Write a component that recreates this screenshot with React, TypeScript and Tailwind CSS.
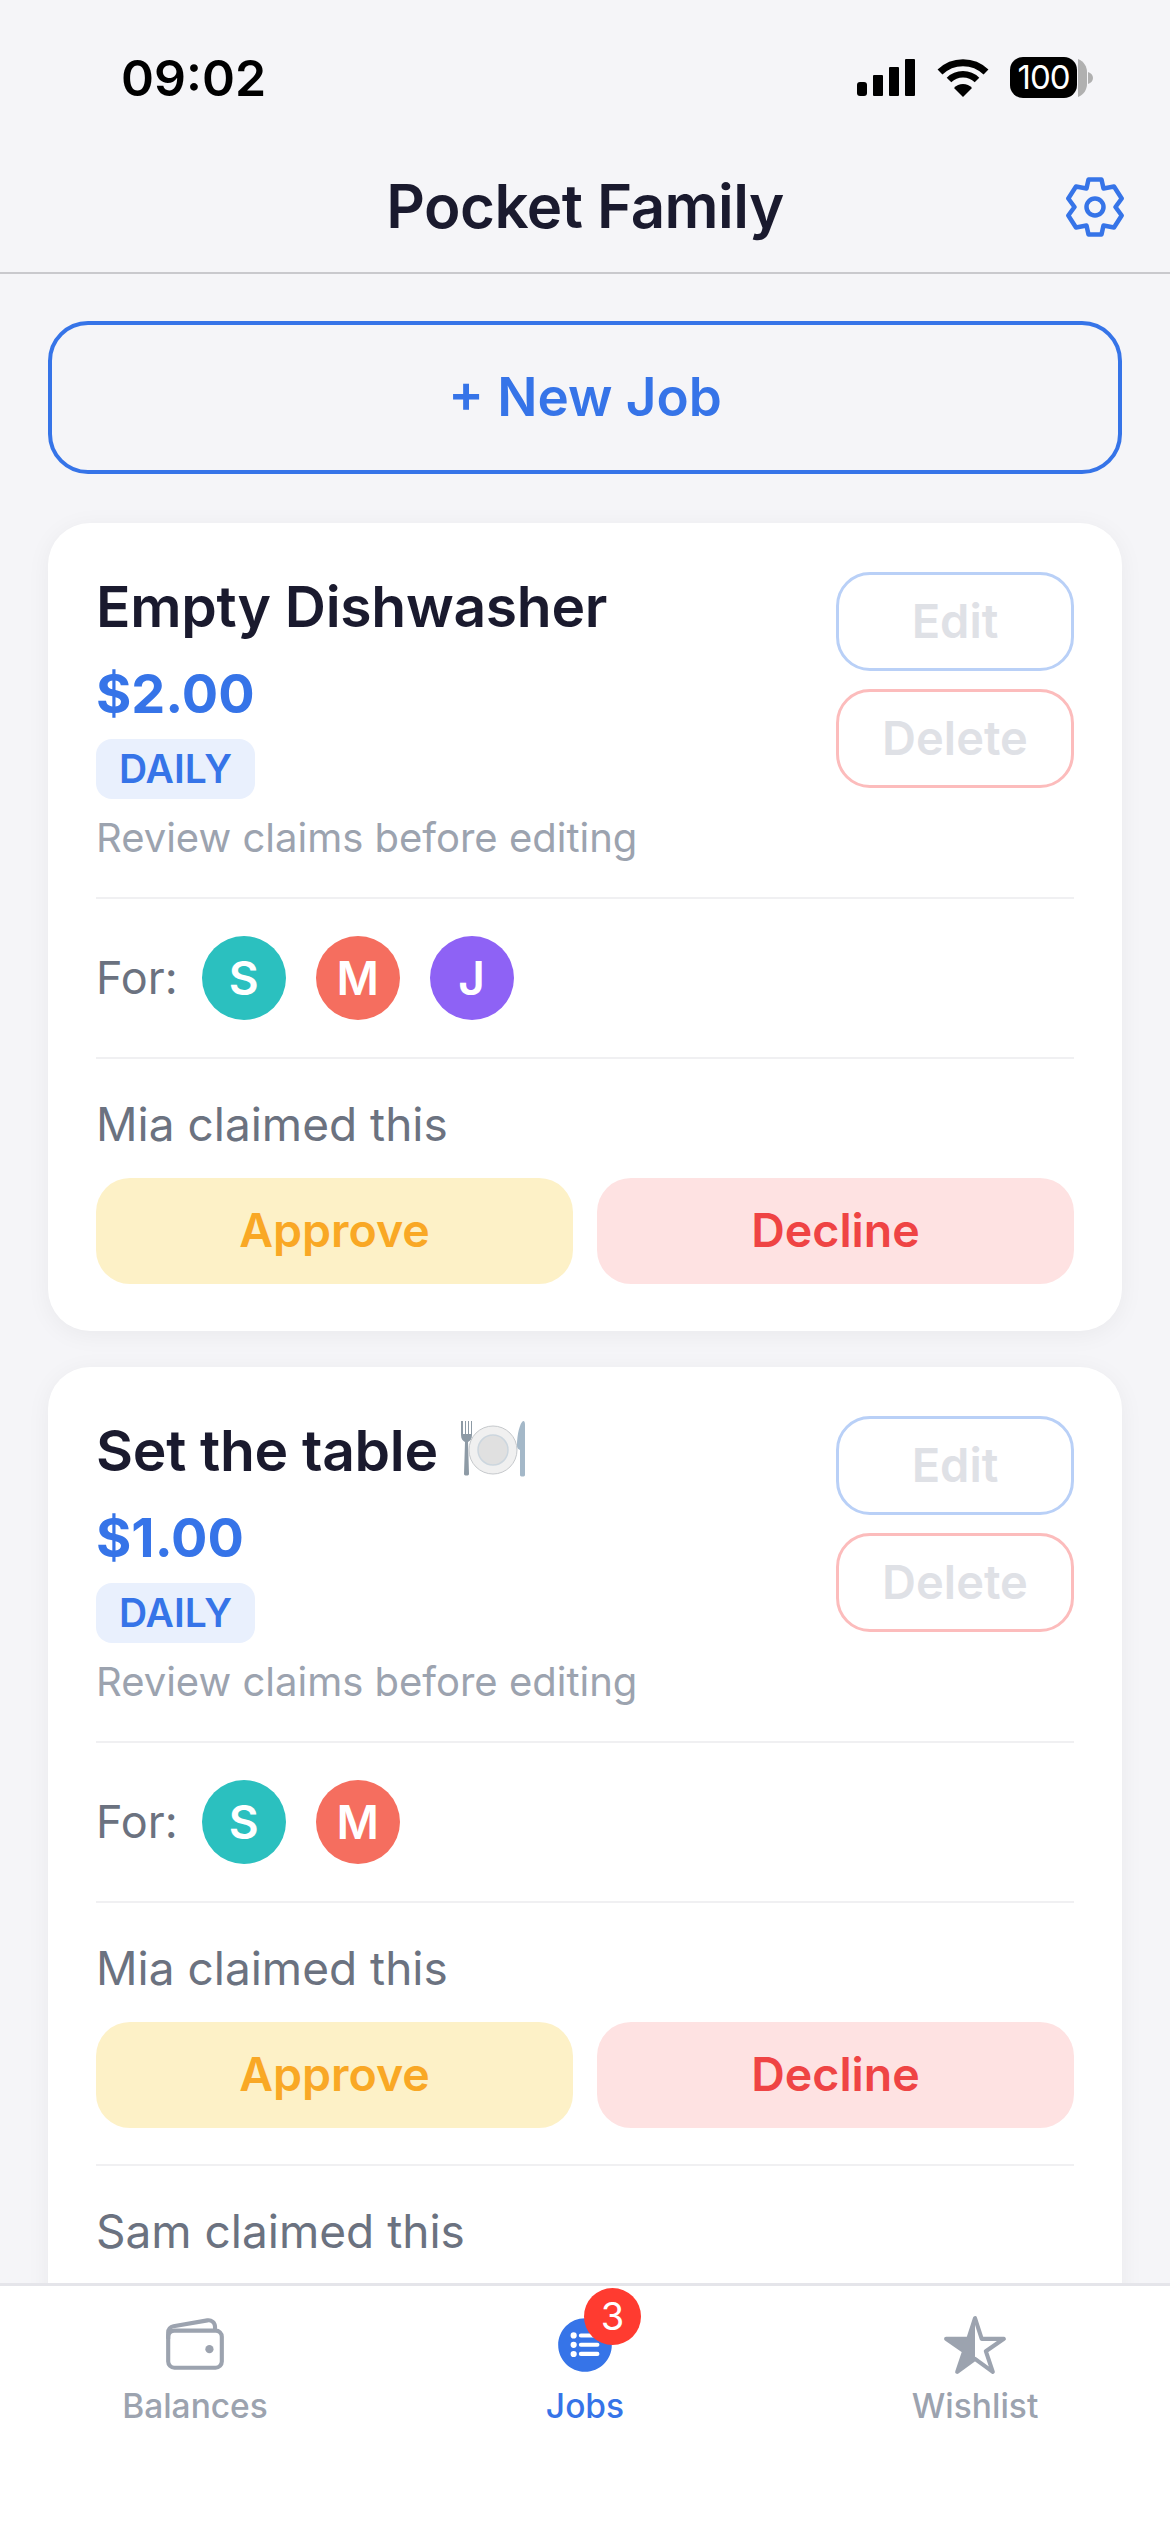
import { IoListCircle, IoStarHalfOutline, IoWalletOutline } from "react-icons/io5";

type Kid = { letter: string; color: string };

const sam: Kid = { letter: "S", color: "bg-[#2bc0bf]" };
const mia: Kid = { letter: "M", color: "bg-[#f56e5f]" };
const jay: Kid = { letter: "J", color: "bg-[#8e62f5]" };

const StatusBar = () => (
  <div className="flex h-[126px] shrink-0 items-end justify-between pb-[20px] pl-[121px] pr-[77px]">
    <span className="text-[50px] leading-[56px] font-semibold text-black">09:02</span>
    <div className="mb-[8px] flex items-center">
      <svg width="58" height="37" viewBox="0 0 58 37" fill="#000">
        <rect x="0" y="23" width="10" height="14" rx="3" />
        <rect x="16" y="16" width="10" height="21" rx="1" />
        <rect x="32" y="8" width="10" height="29" rx="1" />
        <rect x="48" y="0" width="10" height="37" rx="1" />
      </svg>
      <svg className="ml-[22px]" width="52" height="38" viewBox="0 0 52 38" fill="none">
        <path d="M3 13 A33 33 0 0 1 49 13" stroke="#000" strokeWidth="7" />
        <path d="M12 21 A20 20 0 0 1 40 21" stroke="#000" strokeWidth="6.5" />
        <path d="M26 38 L17 29 A12 12 0 0 1 35 29 Z" fill="#000" />
      </svg>
      <div className="ml-[21px] flex items-center">
        <div className="flex h-[41px] w-[67px] items-center justify-center rounded-[13px] bg-black text-[33px] leading-none font-normal tracking-[-1px] text-white">
          100
        </div>
        <svg className="ml-[1px]" width="15" height="38" viewBox="0 0 15 38" fill="#b0b0b0">
          <path d="M0 0 C6 2 9 8 9 13 L9 25 C9 30 6 36 0 38 Z" />
          <path d="M10 13 C13 14 15 16 15 19 C15 22 13 24 10 25 Z" />
        </svg>
      </div>
    </div>
  </div>
);

const Gear = () => (
  <svg
    className="absolute right-[46px] top-[51px]"
    width="58"
    height="60"
    viewBox="0 0 58 60"
    fill="none"
    stroke="#3674e8"
    strokeWidth="4.5"
    strokeLinejoin="round"
  >
    <path d="M22.5 2.5H35.5L37.5 11.5L48 9.5L55.7 21.5L49.5 30L55.7 38.5L48 50.5L37.5 48.5L35.5 57.5H22.5L20.5 48.5L10 50.5L2.3 38.5L8.5 30L2.3 21.5L10 9.5L20.5 11.5Z" />
    <circle cx="29" cy="30" r="8.5" />
  </svg>
);

const Header = () => (
  <div className="relative flex h-[148px] shrink-0 items-center justify-center border-b-[2px] border-[#c9c9cd] pt-[14px]">
    <h1 className="text-[60px] leading-[72px] font-semibold tracking-[-0.5px] text-[#1a1a2e]">Pocket Family</h1>
    <Gear />
  </div>
);

const PlateEmoji = () => (
  <svg className="ml-[22px] mt-[-4px]" width="66" height="58" viewBox="0 0 66 58">
    <path d="M1 1v14c0 4 2 6 4 7l-1 32c0 2 5 2 5 0L8 22c2-1 4-3 4-7V1h-1v13H9V1H8v13H6V1H5v13H3V1z" fill="#8d9aa5" />
    <circle cx="33" cy="30" r="24" fill="#f0f0f0" stroke="#c6c9cc" strokeWidth="1" />
    <circle cx="33" cy="30" r="15" fill="#e0e0e0" stroke="#ccd6de" strokeWidth="1.5" />
    <path d="M63 1c2 0 2 2 2 5v49c0 2-5 2-5 0V30c-2-1-3-2-3-4C57 14 60 3 63 1z" fill="#a4b8c8" />
  </svg>
);

const ActionButton = ({ label, tone }: { label: string; tone: "blue" | "red" }) => (
  <div
    className={`flex h-[99px] w-[238px] items-center justify-center rounded-[34px] border-[3px] bg-white text-[47px] font-semibold text-[#dfe1e6] ${
      tone === "blue" ? "border-[#b9d0f7]" : "border-[#fcbcbc]"
    }`}
  >
    {label}
  </div>
);

// the last claim's buttons sit under the tab bar in the screenshot, so only their space is kept
const Claim = ({ name, actions }: { name: string; actions: boolean }) => (
  <div className="mt-[38px]">
    <div className="text-[46px] leading-[54px] text-[#6b7280]">{name} claimed this</div>
    {actions ? (
      <div className="mt-[27px] flex gap-[24px]">
        <div className="flex h-[106px] flex-1 items-center justify-center rounded-[34px] bg-[#fdf1c7] text-[46.5px] font-semibold text-[#f9a825]">
          Approve
        </div>
        <div className="flex h-[106px] flex-1 items-center justify-center rounded-[34px] bg-[#fee2e2] text-[46.5px] font-semibold text-[#ef4444]">
          Decline
        </div>
      </div>
    ) : (
      <div className="mt-[27px] h-[106px]" />
    )}
  </div>
);

const JobCard = ({
  title,
  emoji,
  amount,
  kids,
  claims,
}: {
  title: string;
  emoji?: boolean;
  amount: string;
  kids: Kid[];
  claims: string[];
}) => (
  <div className="rounded-[42px] bg-white px-[48px] pt-[47px] pb-[47px] shadow-[0_4px_24px_rgba(0,0,0,0.05)]">
    <div className="flex justify-between border-b-[2px] border-[#f0f0f2] pb-[35px]">
      <div>
        <div className="flex h-[74px] items-center text-[57px] font-semibold tracking-[-0.3px] text-[#1a1a2e]">
          {title}
          {emoji && <PlateEmoji />}
        </div>
        <div className="mt-[16px] text-[54px] leading-[68px] font-bold text-[#3674e8]">{amount}</div>
        <div className="mt-[11px] flex h-[60px] w-[159px] items-center justify-center rounded-[16px] bg-[#e9f0fd] text-[39px] font-semibold text-[#3674e8]">
          DAILY
        </div>
        <div className="mt-[15px] text-[40px] leading-[48px] text-[#9ca3af]">Review claims before editing</div>
      </div>
      <div className="mt-[2px] flex flex-col gap-[18px]">
        <ActionButton label="Edit" tone="blue" />
        <ActionButton label="Delete" tone="red" />
      </div>
    </div>
    <div className="flex items-center gap-[24px] border-b-[2px] border-[#f0f0f2] py-[37px]">
      <span className="text-[45px] leading-[54px] text-[#6b7280]">For:</span>
      <div className="flex gap-[30px]">
        {kids.map((k) => (
          <div
            key={k.letter}
            className={`flex h-[84px] w-[84px] items-center justify-center rounded-full text-[46px] font-semibold text-white ${k.color}`}
          >
            {k.letter}
          </div>
        ))}
      </div>
    </div>
    {claims.map((name, i) => (
      <div key={name} className={i > 0 ? "mt-[36px] border-t-[2px] border-[#f0f0f2]" : ""}>
        <Claim name={name} actions={i === 0} />
      </div>
    ))}
  </div>
);

const Tab = ({ label, active, children }: { label: string; active?: boolean; children: React.ReactNode }) => (
  <div className="flex flex-col items-center">
    <div className="relative flex h-[66px] items-center justify-center">{children}</div>
    <span className={`mt-[8px] text-[33.5px] leading-[40px] font-medium ${active ? "text-[#3674e8]" : "text-[#9ca3af]"}`}>
      {label}
    </span>
  </div>
);

const App = () => (
  <div className="flex h-[2532px] w-[1170px] flex-col overflow-hidden bg-[#f5f5f8] font-['Inter',sans-serif]">
    <StatusBar />
    <Header />
    <div className="flex min-h-0 flex-1 flex-col overflow-hidden px-[48px] pt-[47px]">
      <div className="flex h-[153px] shrink-0 items-center justify-center rounded-[40px] border-[4px] border-[#3674e8] text-[53px] font-semibold text-[#3674e8]">
        + New Job
      </div>
      <div className="mt-[49px] flex flex-col gap-[36px]">
        <JobCard title="Empty Dishwasher" amount="$2.00" kids={[sam, mia, jay]} claims={["Mia"]} />
        <JobCard title="Set the table" emoji amount="$1.00" kids={[sam, mia]} claims={["Mia", "Sam"]} />
      </div>
    </div>
    <div className="grid h-[249px] shrink-0 grid-cols-3 border-t-[3px] border-[#e5e5ea] bg-white pt-[26px]">
      <Tab label="Balances">
        <IoWalletOutline size={66} className="text-[#9ca3af]" />
      </Tab>
      <Tab label="Jobs" active>
        <IoListCircle size={66} className="text-[#3674e8]" />
        <div className="absolute left-[32px] top-[-24px] flex h-[57px] w-[57px] items-center justify-center rounded-full bg-[#ff3b30] text-[38px] text-white">
          3
        </div>
      </Tab>
      <Tab label="Wishlist">
        <IoStarHalfOutline size={66} className="text-[#9ca3af]" />
      </Tab>
    </div>
  </div>
);

export default App;
